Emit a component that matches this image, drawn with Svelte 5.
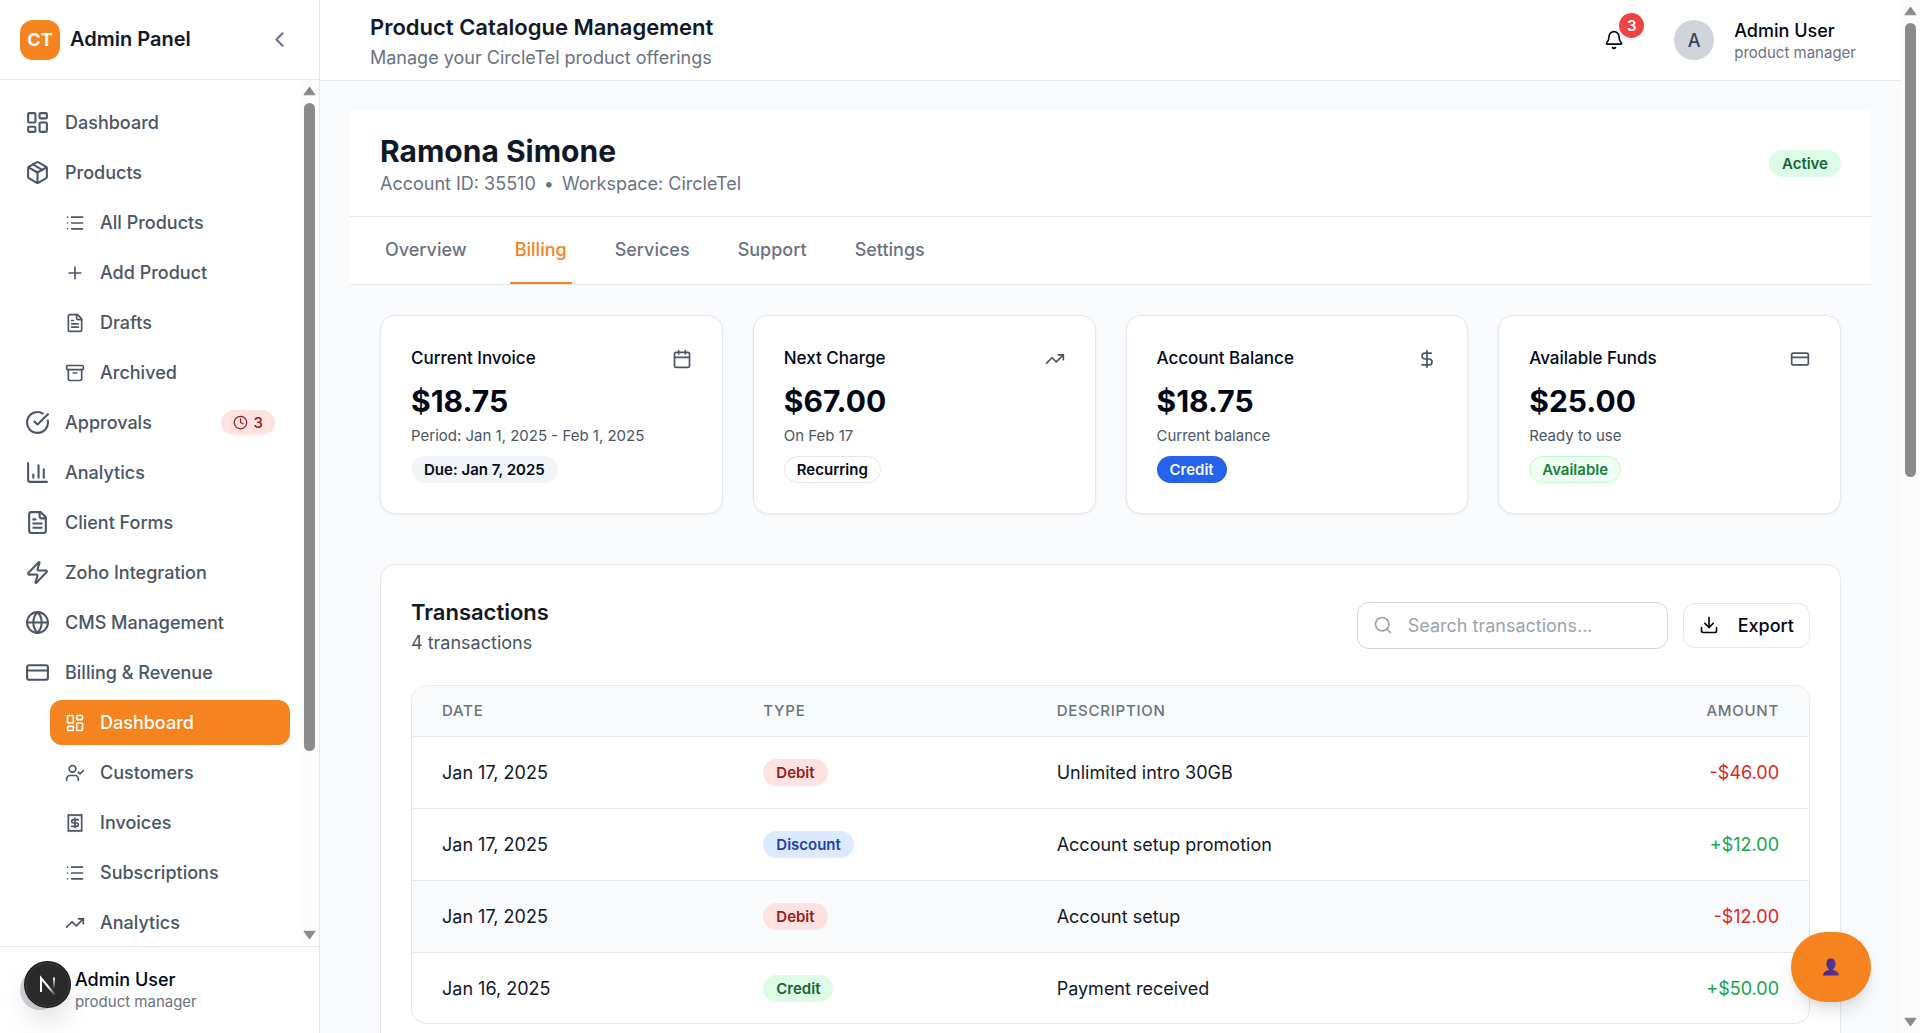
<script>
  const icons = {
    dashboard: '<rect width="7" height="9" x="3" y="3" rx="1"/><rect width="7" height="5" x="14" y="3" rx="1"/><rect width="7" height="9" x="14" y="12" rx="1"/><rect width="7" height="5" x="3" y="16" rx="1"/>',
    package: '<path d="M11 21.73a2 2 0 0 0 2 0l7-4A2 2 0 0 0 21 16V8a2 2 0 0 0-1-1.73l-7-4a2 2 0 0 0-2 0l-7 4A2 2 0 0 0 3 8v8a2 2 0 0 0 1 1.73z"/><path d="M12 22V12"/><path d="M3.29 7 12 12l8.71-5"/><path d="m7.5 4.27 9 5.15"/>',
    list: '<path d="M3 5h.01M3 12h.01M3 19h.01M8 5h13M8 12h13M8 19h13"/>',
    plus: '<path d="M5 12h14M12 5v14"/>',
    file: '<path d="M15 2H6a2 2 0 0 0-2 2v16a2 2 0 0 0 2 2h12a2 2 0 0 0 2-2V7Z"/><path d="M14 2v4a2 2 0 0 0 2 2h4"/><path d="M10 9H8M16 13H8M16 17H8"/>',
    archive: '<rect width="20" height="5" x="2" y="3" rx="1"/><path d="M4 8v11a2 2 0 0 0 2 2h12a2 2 0 0 0 2-2V8"/><path d="M10 12h4"/>',
    check: '<path d="M21.801 10A10 10 0 1 1 17 3.335"/><path d="m9 11 3 3L22 4"/>',
    chart: '<path d="M3 3v16a2 2 0 0 0 2 2h16"/><path d="M18 17V9M13 17V5M8 17v-3"/>',
    zap: '<path d="M4 14a1 1 0 0 1-.78-1.63l9.9-10.2a.5.5 0 0 1 .86.46l-1.92 6.02A1 1 0 0 0 13 10h7a1 1 0 0 1 .78 1.63l-9.9 10.2a.5.5 0 0 1-.86-.46l1.92-6.02A1 1 0 0 0 11 14z"/>',
    globe: '<circle cx="12" cy="12" r="10"/><path d="M12 2a14.5 14.5 0 0 0 0 20 14.5 14.5 0 0 0 0-20"/><path d="M2 12h20"/>',
    card: '<rect width="20" height="14" x="2" y="5" rx="2"/><path d="M2 10h20"/>',
    userCheck: '<path d="m16 11 2 2 4-4"/><path d="M16 21v-2a4 4 0 0 0-4-4H6a4 4 0 0 0-4 4v2"/><circle cx="9" cy="7" r="4"/>',
    receipt: '<path d="M4 2v20l2-1 2 1 2-1 2 1 2-1 2 1 2-1 2 1V2l-2 1-2-1-2 1-2-1-2 1-2-1-2 1Z"/><path d="M16 8h-6a2 2 0 1 0 0 4h4a2 2 0 1 1 0 4H8"/><path d="M12 17.5v-11"/>',
    trend: '<path d="M16 7h6v6"/><path d="m22 7-8.5 8.5-5-5L2 17"/>',
    clock: '<circle cx="12" cy="12" r="10"/><path d="M12 6v6l4 2"/>',
    calendar: '<path d="M8 2v4M16 2v4"/><rect width="18" height="18" x="3" y="4" rx="2"/><path d="M3 10h18"/>',
    dollar: '<path d="M12 2v20"/><path d="M17 5H9.5a3.5 3.5 0 0 0 0 7h5a3.5 3.5 0 0 1 0 7H6"/>',
    chevron: '<path d="m15 18-6-6 6-6"/>',
    bell: '<path d="M10.268 21a2 2 0 0 0 3.464 0"/><path d="M3.262 15.326A1 1 0 0 0 4 17h16a1 1 0 0 0 .74-1.673C19.41 13.956 18 12.499 18 8A6 6 0 0 0 6 8c0 4.499-1.411 5.956-2.738 7.326"/>',
    search: '<path d="m21 21-4.34-4.34"/><circle cx="11" cy="11" r="8"/>',
    download: '<path d="M12 15V3"/><path d="M21 15v4a2 2 0 0 1-2 2H5a2 2 0 0 1-2-2v-4"/><path d="m7 10 5 5 5-5"/>'
  };

  const nav = [
    { label: 'Dashboard', icon: 'dashboard' },
    { label: 'Products', icon: 'package' },
    { label: 'All Products', icon: 'list', sub: true },
    { label: 'Add Product', icon: 'plus', sub: true },
    { label: 'Drafts', icon: 'file', sub: true },
    { label: 'Archived', icon: 'archive', sub: true },
    { label: 'Approvals', icon: 'check', count: 3 },
    { label: 'Analytics', icon: 'chart' },
    { label: 'Client Forms', icon: 'file' },
    { label: 'Zoho Integration', icon: 'zap' },
    { label: 'CMS Management', icon: 'globe' },
    { label: 'Billing & Revenue', icon: 'card' },
    { label: 'Dashboard', icon: 'dashboard', sub: true, active: true },
    { label: 'Customers', icon: 'userCheck', sub: true },
    { label: 'Invoices', icon: 'receipt', sub: true },
    { label: 'Subscriptions', icon: 'list', sub: true },
    { label: 'Analytics', icon: 'trend', sub: true }
  ];

  const tabs = ['Overview', 'Billing', 'Services', 'Support', 'Settings'];
  let activeTab = $state('Billing');

  const cards = [
    { title: 'Current Invoice', icon: 'calendar', value: '$18.75', note: 'Period: Jan 1, 2025 - Feb 1, 2025', badge: 'Due: Jan 7, 2025', tone: 'muted' },
    { title: 'Next Charge', icon: 'trend', value: '$67.00', note: 'On Feb 17', badge: 'Recurring', tone: 'outline' },
    { title: 'Account Balance', icon: 'dollar', value: '$18.75', note: 'Current balance', badge: 'Credit', tone: 'solid' },
    { title: 'Available Funds', icon: 'card', value: '$25.00', note: 'Ready to use', badge: 'Available', tone: 'available' }
  ];

  const rows = [
    { date: 'Jan 17, 2025', type: 'Debit', text: 'Unlimited intro 30GB', amount: '-$46.00' },
    { date: 'Jan 17, 2025', type: 'Discount', text: 'Account setup promotion', amount: '+$12.00' },
    { date: 'Jan 17, 2025', type: 'Debit', text: 'Account setup', amount: '-$12.00', shaded: true },
    { date: 'Jan 16, 2025', type: 'Credit', text: 'Payment received', amount: '+$50.00' }
  ];
  const typeTone = { Debit: 'red', Discount: 'blue', Credit: 'green' };

  let query = $state('');
  const shown = $derived(rows.filter((r) => (r.text + r.type).toLowerCase().includes(query.toLowerCase())));
</script>

{#snippet icon(name, size = '')}
  <svg class="icon {size}" viewBox="0 0 24 24" aria-hidden="true">{@html icons[name]}</svg>
{/snippet}

{#snippet scrollbar(kind)}
  <div class="scrollbar" aria-hidden="true">
    <svg class="arrow" viewBox="0 0 12 9"><path d="M6 1 11 8H1Z" /></svg>
    <div class="track"><div class="thumb {kind}"></div></div>
    <svg class="arrow" viewBox="0 0 12 9"><path d="M6 8 1 1H11Z" /></svg>
  </div>
{/snippet}

<div class="app">
  <aside class="sidebar">
    <div class="brand">
      <span class="logo">CT</span>
      <span class="brand-name">Admin Panel</span>
      <button class="collapse" aria-label="Collapse sidebar">{@render icon('chevron', 'large')}</button>
    </div>
    <div class="nav-wrap">
      <nav class="scroll-area">
        <ul>
          {#each nav as item}
            <li>
              <a href="#nav" class="nav-item" class:sub={item.sub} class:active={item.active}>
                {@render icon(item.icon, item.sub ? '' : 'large')}
                <span>{item.label}</span>
                {#if item.count}
                  <span class="count">{@render icon('clock', 'small')}{item.count}</span>
                {/if}
              </a>
            </li>
          {/each}
        </ul>
      </nav>
      {@render scrollbar('side')}
    </div>
    <div class="side-user">
      <span class="avatar"></span>
      <div>
        <p class="user-name">Admin User</p>
        <p class="user-role">product manager</p>
      </div>
      <button class="dev-badge" aria-label="Developer tools">
        <svg viewBox="0 0 47 47" aria-hidden="true">
          <defs>
            <linearGradient id="n-diag" x1="25" y1="26" x2="32" y2="34" gradientUnits="userSpaceOnUse">
              <stop offset="0" stop-color="#fff" /><stop offset="1" stop-color="#fff" stop-opacity="0" />
            </linearGradient>
            <linearGradient id="n-bar" x1="0" y1="16" x2="0" y2="28" gradientUnits="userSpaceOnUse">
              <stop offset="0" stop-color="#fff" /><stop offset="1" stop-color="#fff" stop-opacity="0" />
            </linearGradient>
          </defs>
          <circle cx="23.5" cy="23.5" r="23.5" fill="#141414" />
          <circle cx="23.5" cy="23.5" r="21.7" fill="#2a2a2a" stroke="#454545" stroke-width="1" />
          <path d="M17 31V17L31 34" fill="none" stroke="url(#n-diag)" stroke-width="2" />
          <path d="M30 16.5V28" fill="none" stroke="url(#n-bar)" stroke-width="2" />
        </svg>
      </button>
    </div>
  </aside>

  <div class="page">
    <div class="scroll-area page-body">
      <header class="topbar">
        <div>
          <h1>Product Catalogue Management</h1>
          <p class="lead">Manage your CircleTel product offerings</p>
        </div>
        <div class="top-actions">
          <button class="bell" aria-label="Notifications, 3 unread">
            {@render icon('bell')}
            <span class="bell-count">3</span>
          </button>
          <button class="user-menu">
            <span class="avatar">A</span>
            <span class="user-text">
              <span class="user-name">Admin User</span>
              <span class="user-role">product manager</span>
            </span>
          </button>
        </div>
      </header>

      <main>
        <section class="account">
          <div class="account-head">
            <div>
              <h2>Ramona Simone</h2>
              <p class="meta"><span>Account ID: 35510</span><span>•</span><span>Workspace: CircleTel</span></p>
            </div>
            <span class="badge green">Active</span>
          </div>
          <nav class="tabs">
            {#each tabs as tab}
              <button class:current={tab === activeTab} onclick={() => (activeTab = tab)}>{tab}</button>
            {/each}
          </nav>
        </section>

        <div class="content">
          <section class="cards">
            {#each cards as c}
              <article class="card">
                <div class="card-head">
                  <h3>{c.title}</h3>
                  {@render icon(c.icon)}
                </div>
                <p class="value">{c.value}</p>
                <p class="note">{c.note}</p>
                <span class="badge {c.tone}">{c.badge}</span>
              </article>
            {/each}
          </section>

          <section class="panel">
            <div class="panel-head">
              <div>
                <h3>Transactions</h3>
                <p>{shown.length} transactions</p>
              </div>
              <div class="tools">
                <label class="search">
                  {@render icon('search')}
                  <input type="text" placeholder="Search transactions..." aria-label="Search transactions" bind:value={query} />
                </label>
                <button class="export">{@render icon('download')}Export</button>
              </div>
            </div>
            <div class="table-box">
              <table>
                <thead>
                  <tr><th class="c-date">Date</th><th class="c-type">Type</th><th>Description</th><th class="num">Amount</th></tr>
                </thead>
                <tbody>
                  {#each shown as r}
                    <tr class:shaded={r.shaded}>
                      <td>{r.date}</td>
                      <td><span class="badge {typeTone[r.type]}">{r.type}</span></td>
                      <td>{r.text}</td>
                      <td class="num {r.amount[0] === '-' ? 'neg' : 'pos'}">{r.amount}</td>
                    </tr>
                  {/each}
                </tbody>
              </table>
            </div>
          </section>
        </div>
      </main>
    </div>
    {@render scrollbar('main')}
    <button class="fab" aria-label="Open profile">
      <svg viewBox="0 0 16 18" aria-hidden="true">
        <defs>
          <linearGradient id="bust" x1="0" x2="1"><stop offset="0" stop-color="#40297a" /><stop offset="1" stop-color="#633a9c" /></linearGradient>
        </defs>
        <path fill="url(#bust)" d="M8 .5C4.800.5 3.600 2.500 3.700 5.200 2.900 5.300 3 7.500 3.900 7.700 4.300 9.500 5 10.500 6 11.200V12C3.500 12.700.400 13.500 0 17.500H16C15.600 13.500 12.500 12.700 10 12V11.200C11 10.500 11.700 9.500 12.100 7.700 13 7.500 13.100 5.300 12.300 5.200 12.400 2.500 11.200.5 8 .5Z" />
      </svg>
    </button>
  </div>
</div>

<style>
  :global(body) { margin: 0; }
  .app {
    display: flex;
    height: 100vh;
    overflow: hidden;
    font-family: Inter, 'Liberation Sans', sans-serif;
    font-size: 18px;
    line-height: 25px;
    color: #020817;
    background: #f9fafb;
  }
  .app :global(*) { box-sizing: border-box; }
  h1, h2, h3, p, ul { margin: 0; padding: 0; }
  button { font: inherit; color: inherit; background: none; border: 0; padding: 0; cursor: pointer; }
  a { text-decoration: none; }

  .icon {
    width: 20px;
    height: 20px;
    flex: none;
    fill: none;
    stroke: currentColor;
    stroke-width: 2;
    stroke-linecap: round;
    stroke-linejoin: round;
  }
  .icon.large { width: 25px; height: 25px; }
  .icon.small { width: 15px; height: 15px; }

  .scroll-area { flex: 1; min-width: 0; overflow-y: auto; scrollbar-width: none; }
  .scrollbar {
    flex: none;
    display: flex;
    flex-direction: column;
    align-items: center;
    justify-content: space-between;
    width: 19px;
    padding: 6px 0;
    background: #fcfcfc;
  }
  .arrow { width: 13px; height: 10px; fill: #8b8b8b; stroke: #8b8b8b; stroke-width: 1; stroke-linejoin: round; }
  .track { flex: 1; width: 11px; padding: 7px 0; }
  .thumb { border-radius: 6px; background: #8b8b8b; }
  .thumb.side { height: 79%; }
  .thumb.main { height: 46%; }

  .sidebar {
    flex: none;
    display: flex;
    flex-direction: column;
    width: 320px;
    background: #fff;
    border-right: 1px solid #e5e7eb;
  }
  .brand {
    display: flex;
    align-items: center;
    gap: 10px;
    height: 80px;
    padding: 0 27px 0 20px;
    border-bottom: 1px solid #e5e7eb;
  }
  .logo {
    display: grid;
    place-items: center;
    width: 40px;
    height: 40px;
    border-radius: 13px;
    background: #f5831f;
    color: #fff;
    font-weight: 700;
  }
  .brand-name { font-size: 20px; font-weight: 600; color: #111827; }
  .collapse { display: flex; margin-left: auto; color: #6b7280; }
  .nav-wrap { flex: 1; min-height: 0; display: flex; }
  nav ul { list-style: none; display: flex; flex-direction: column; gap: 5px; padding: 20px 10px; }
  .nav-item {
    display: flex;
    align-items: center;
    gap: 15px;
    height: 45px;
    padding: 0 15px;
    border-radius: 12px;
    color: #4b5563;
    font-weight: 500;
  }
  .nav-item.sub { margin-left: 40px; }
  .nav-item.active { background: #f5831f; color: #fff; }
  .count {
    display: flex;
    align-items: center;
    gap: 6px;
    height: 25px;
    margin-left: auto;
    padding: 0 12px;
    border-radius: 13px;
    background: #fee2e2;
    color: #991b1b;
    font-size: 15px;
  }
  .side-user {
    position: relative;
    display: flex;
    align-items: center;
    gap: 15px;
    padding: 20px 20px 21px;
    border-top: 1px solid #e5e7eb;
  }
  .avatar {
    flex: none;
    display: grid;
    place-items: center;
    width: 40px;
    height: 40px;
    border-radius: 50%;
    background: #d1d5db;
    color: #374151;
    font-weight: 500;
  }
  .user-name { font-weight: 500; color: #020817; }
  .user-role { font-size: 15px; line-height: 20px; color: #6b7280; }
  .dev-badge {
    position: absolute;
    left: 24px;
    top: 14px;
    width: 47px;
    height: 47px;
    border-radius: 50%;
    box-shadow: 0 16px 32px -8px rgba(0, 0, 0, 0.24);
  }
  .dev-badge svg { display: block; }

  .page { position: relative; flex: 1; min-width: 0; display: flex; }
  .topbar {
    display: flex;
    align-items: center;
    justify-content: space-between;
    padding: 10px 30px 10px 50px;
    background: #fff;
    border-bottom: 1px solid #e5e7eb;
  }
  h1 { font-size: 22px; line-height: 35px; font-weight: 600; color: #111827; }
  .lead { color: #6b7280; }
  .top-actions { display: flex; align-items: center; gap: 20px; }
  .bell { position: relative; display: grid; place-items: center; width: 50px; height: 45px; }
  .bell-count {
    position: absolute;
    top: -5px;
    right: -5px;
    width: 25px;
    height: 25px;
    border-radius: 50%;
    background: #ef4444;
    color: #fff;
    font-size: 15px;
    font-weight: 600;
  }
  .user-menu { display: flex; align-items: center; gap: 20px; padding: 0 15px; text-align: left; }
  .user-text { display: flex; flex-direction: column; }

  main { padding: 30px; }
  .account { background: #fff; }
  .account-head {
    display: flex;
    align-items: center;
    justify-content: space-between;
    padding: 20px 30px;
    border-bottom: 1px solid #e5e7eb;
  }
  h2 { font-size: 30px; line-height: 40px; font-weight: 700; color: #111827; }
  .meta { display: flex; gap: 8px; color: #6b7280; }
  .tabs { display: flex; gap: 38px; padding: 0 30px; border-bottom: 1px solid #e5e7eb; }
  .tabs button {
    padding: 20px 5px;
    border-bottom: 2px solid transparent;
    color: #6b7280;
    font-weight: 500;
  }
  .tabs .current { color: #f5831f; border-color: #f5831f; }

  .badge {
    display: inline-block;
    padding: 2px 12px;
    border: 1px solid transparent;
    border-radius: 14px;
    font-size: 15px;
    line-height: 21px;
    font-weight: 600;
    white-space: nowrap;
  }
  .badge.green { background: #dcfce7; color: #166534; }
  .badge.red { background: #fee2e2; color: #991b1b; }
  .badge.blue { background: #dbeafe; color: #1e40af; }
  .badge.muted { background: #f1f5f9; }
  .badge.outline { border-color: #e2e8f0; }
  .badge.solid { background: #2563eb; color: #f8fafc; }
  .badge.available { background: #f0fdf4; border-color: #bbf7d0; color: #15803d; }

  .content { display: flex; flex-direction: column; gap: 50px; padding: 30px; }
  .cards { display: grid; grid-template-columns: repeat(4, minmax(0, 1fr)); gap: 30px; }
  .card {
    padding: 30px;
    border: 1px solid #e2e8f0;
    border-radius: 15px;
    background: #fff;
    box-shadow: 0 1px 3px rgba(0, 0, 0, 0.06);
  }
  .card-head { display: flex; align-items: center; justify-content: space-between; margin-bottom: 10px; color: #4b5563; }
  .card h3 { font-size: 17px; font-weight: 500; color: #020817; }
  .value { font-size: 30px; line-height: 40px; font-weight: 700; }
  .note { margin: 5px 0 10px; font-size: 15px; line-height: 20px; color: #4b5563; }
  .card .badge { display: block; width: fit-content; }

  .panel { padding: 30px; border: 1px solid #e5e7eb; border-radius: 15px; background: #fff; }
  .panel-head { display: flex; align-items: center; justify-content: space-between; margin-bottom: 30px; }
  .panel h3 { font-size: 22px; line-height: 35px; font-weight: 600; color: #111827; }
  .panel-head p { color: #4b5563; }
  .tools { display: flex; align-items: center; gap: 15px; }
  .search {
    display: flex;
    align-items: center;
    gap: 15px;
    width: 311px;
    height: 47px;
    padding: 0 15px;
    border: 1px solid #d1d5db;
    border-radius: 12px;
    color: #9ca3af;
  }
  .search input { flex: 1; min-width: 0; padding: 0; border: 0; outline: 0; background: none; font: inherit; color: #111827; }
  .search input::placeholder { color: #9ca3af; }
  .export {
    display: flex;
    align-items: center;
    gap: 19px;
    height: 45px;
    padding: 0 15px;
    border: 1px solid #e2e8f0;
    border-radius: 12px;
    font-weight: 500;
  }
  .table-box { overflow: hidden; border: 1px solid #e5e7eb; border-radius: 15px; }
  table { width: 100%; border-collapse: separate; border-spacing: 0; table-layout: fixed; }
  th, td { padding: 15px 30px; text-align: left; border-bottom: 1px solid #e5e7eb; }
  th {
    background: #f9fafb;
    color: #6b7280;
    font-size: 15px;
    line-height: 20px;
    font-weight: 500;
    letter-spacing: 0.05em;
    text-transform: uppercase;
  }
  td { height: 72px; padding: 0 30px; color: #111827; }
  tbody tr:last-child td { border-bottom: 0; height: 70px; }
  .shaded { background: #f9fafb; }
  .c-date { width: 23%; }
  .c-type { width: 21%; }
  .num { text-align: right; }
  .neg { color: #dc2626; }
  .pos { color: #16a34a; }

  .fab {
    position: absolute;
    right: 49px;
    bottom: 31px;
    display: grid;
    place-items: center;
    width: 80px;
    height: 70px;
    border-radius: 35px;
    background: #f5831f;
    box-shadow: 0 12px 20px -4px rgba(0, 0, 0, 0.12), 0 4px 8px -4px rgba(0, 0, 0, 0.1);
  }
  .fab svg { width: 16px; height: 18px; }
</style>
